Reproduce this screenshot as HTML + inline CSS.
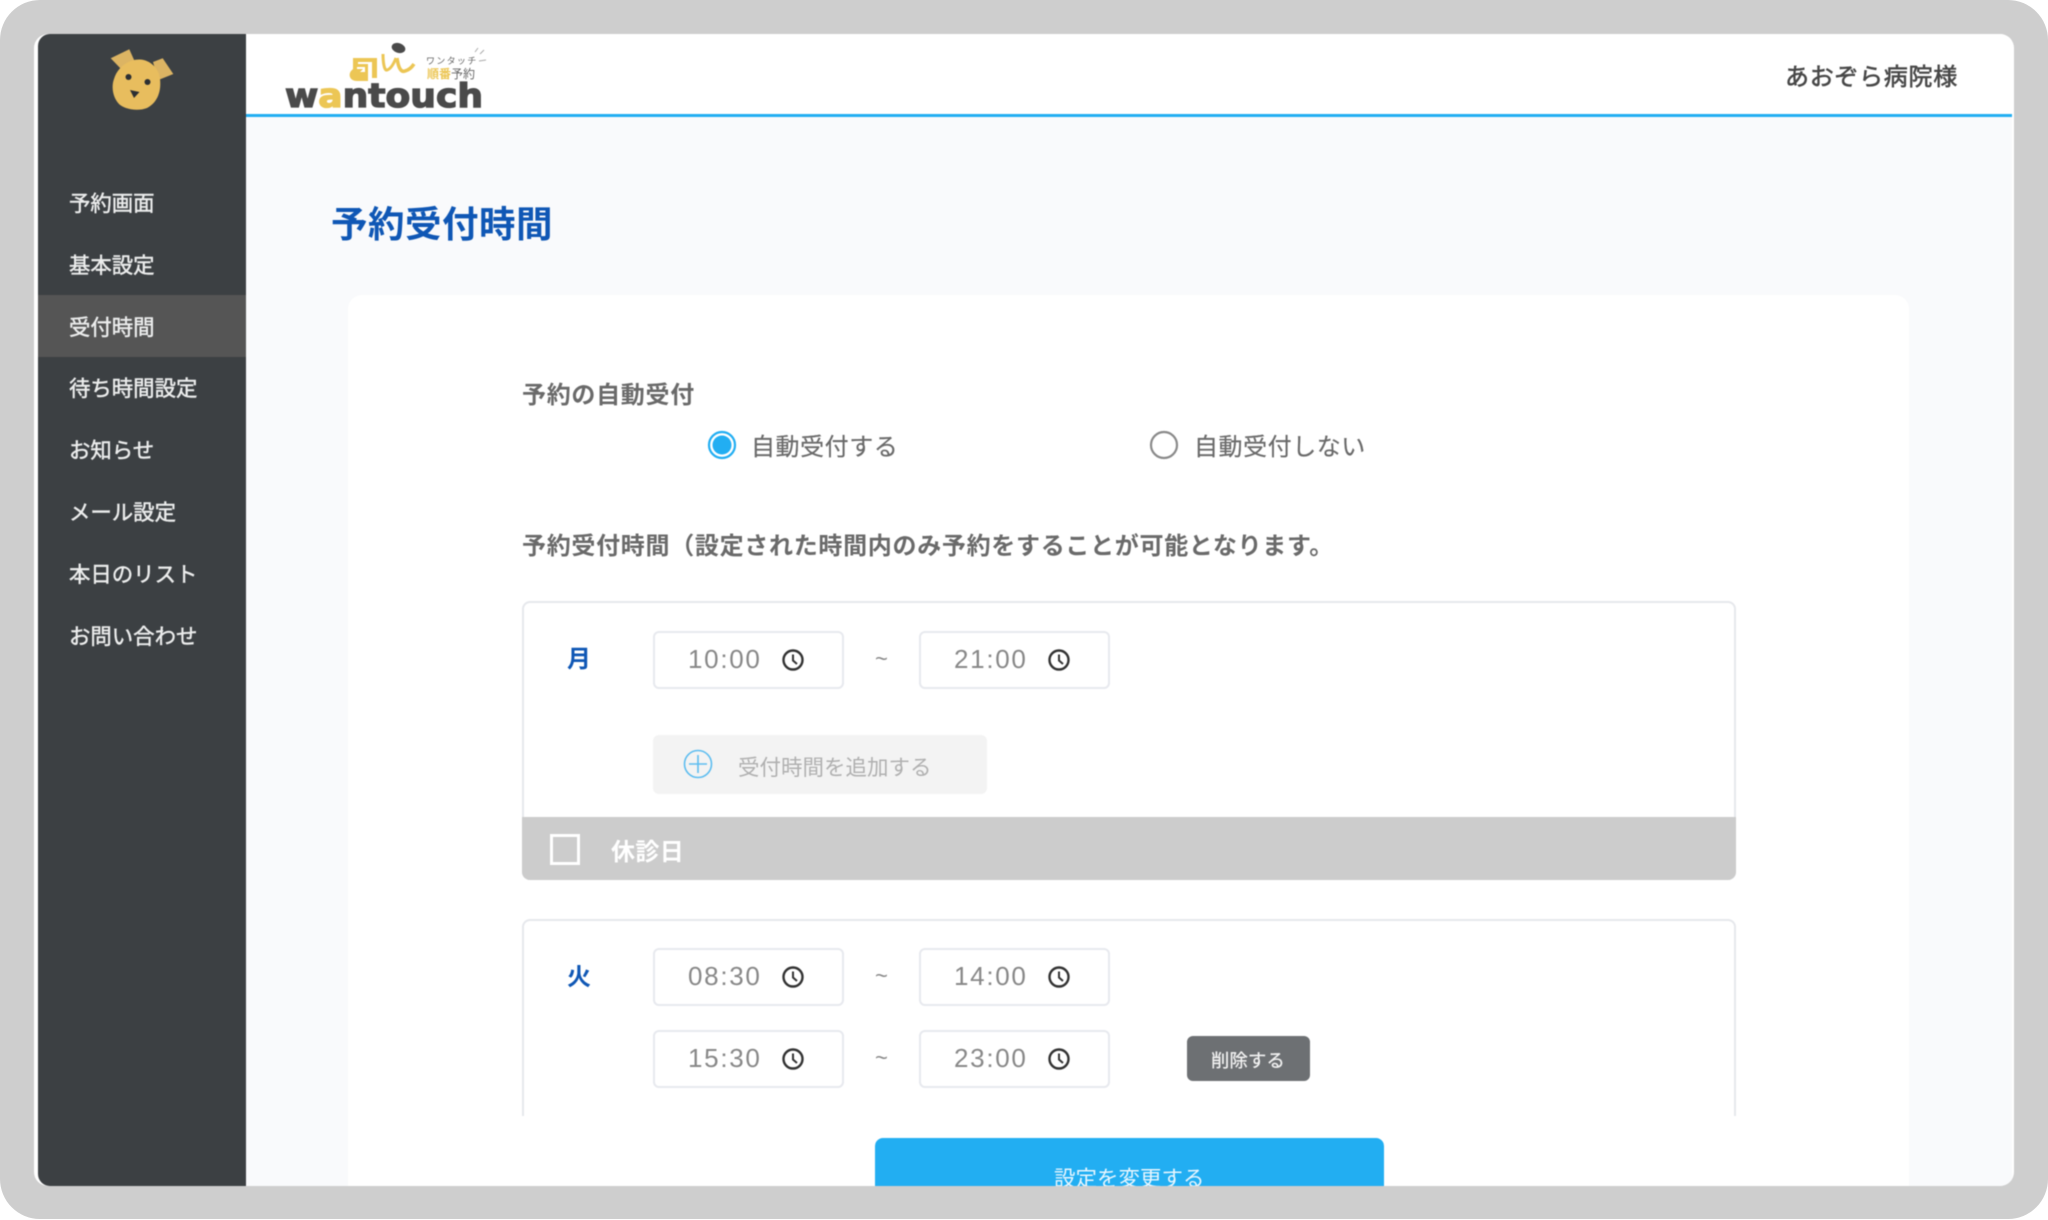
<!DOCTYPE html>
<html lang="ja">
<head>
<meta charset="utf-8">
<title>予約受付時間</title>
<style>
html,body{margin:0;padding:0;width:2048px;height:1220px;overflow:hidden;background:#fff}
body{position:relative;font-family:"Liberation Sans","Noto Sans CJK JP",sans-serif;color:#666}
div,span,svg{position:absolute;box-sizing:border-box}
.t{white-space:nowrap;font-family:"Noto Sans CJK JP","Liberation Sans",sans-serif}
#frame{left:0;top:0;width:2048px;height:1219px;background:#cecece;border-radius:40px}
#screen{left:34px;top:34px;width:1980px;height:1152px;background:#fff;border-radius:14px;overflow:hidden;filter:blur(.45px)}
#side{left:4px;top:0;width:208px;height:1152px;background:#3c4043;border-radius:12px 0 0 12px}
#main{left:212px;top:83px;width:1766px;height:1069px;background:#f9fafc}
#head{left:212px;top:0;width:1766px;height:83px;background:#fff;border-bottom:3px solid #22aef2}
.nav{left:31px;font-size:21.400px;line-height:30px;color:#eceded;height:30px;-webkit-text-stroke:.45px #eceded}
#active{left:0;top:261px;width:208px;height:62px;background:#555}
#card{left:314px;top:261px;width:1561px;height:900px;background:#fff;border-radius:14px 14px 0 0}
.lab{font-size:24px;letter-spacing:.7px;line-height:34px;height:34px;color:#6a6a6a;font-weight:700}
.reg{font-size:24px;letter-spacing:.55px;line-height:34px;height:34px;color:#6a6a6a;-webkit-text-stroke:.2px #6a6a6a}
.inp{width:191px;height:58px;border:2px solid #e7e9ee;border-radius:6px;background:#fff}
.inp b{position:absolute;left:33px;top:10px;font:400 26px/32px "Liberation Sans",sans-serif;letter-spacing:1.700px;color:#888}
.inp svg{left:125px;top:14px;width:26px;height:26px}
.til{font:400 22px/30px "Liberation Sans",sans-serif;color:#888}
.day{font-size:24px;line-height:34px;color:#0f57b5;font-weight:700}
</style>
</head>
<body>
<div id="frame"></div>
<div id="screen">
  <div id="main"></div>
  <div id="head"></div>
  <div id="side">
    <div id="active"></div>
    <svg style="left:60px;top:0;width:100px;height:90px" viewBox="98 34 100 90">
      <polygon points="110.700,58.300 129.300,49.300 135,62 123,71" fill="#dcb463"/>
      <polygon points="153,62 162.700,58.300 173.300,74 158.300,80" fill="#dcb463"/>
      <path d="M140 59.500C150 60 159 68 160 79C161.500 92 157 103 147 108C138 111.500 125 109.500 119 104C113 98 111 87 114 79C117 68 128 59 140 59.500Z" fill="#e8bd5e"/>
      <circle cx="128.500" cy="77" r="3" fill="#2c2f33"/>
      <circle cx="147.500" cy="82" r="3" fill="#2c2f33"/>
      <polygon points="130,90 139.500,92 134,98" fill="#2c2f33"/>
    </svg>
    <span class="t nav" style="top:154px">予約画面</span>
    <span class="t nav" style="top:216px">基本設定</span>
    <span class="t nav" style="top:278px">受付時間</span>
    <span class="t nav" style="top:339px">待ち時間設定</span>
    <span class="t nav" style="top:401px">お知らせ</span>
    <span class="t nav" style="top:463px">メール設定</span>
    <span class="t nav" style="top:525px">本日のリスト</span>
    <span class="t nav" style="top:587px">お問い合わせ</span>
  </div>

  <svg style="left:236px;top:0;width:250px;height:83px" viewBox="270 34 250 83">
    <path fill-rule="evenodd" d="M353 58H377V78H372V62H358V64H368V81H357C350 81 348 75 351 71L353 69ZM357 67V69H363L360 72H365V67Z" fill="#ecc655"/>
    <path d="M383 54C383 61 384 71 387 70C391 69 394 63 396 58" fill="none" stroke="#ecc655" stroke-width="3"/>
    <path d="M397 58C398 65 400 73 405 71C409 70 412 67 414 64" fill="none" stroke="#ecc655" stroke-width="3.500"/>
    <ellipse cx="398.500" cy="48" rx="7" ry="4.800" transform="rotate(18 398.500 48)" fill="#4a4a4a"/>
    <path d="M475 52L478 48M480 54L484 50M479 61L486 60" stroke="#aaa" stroke-width="1" fill="none"/>
    <text x="426" y="64" font-family="Noto Sans CJK JP, sans-serif" font-size="9" letter-spacing="1.300" fill="#666">ワンタッチ</text>
    <text x="427" y="78" font-family="Noto Sans CJK JP, sans-serif" font-size="12" font-weight="700" fill="#ecc655">順番<tspan fill="#666" font-weight="400">予約</tspan></text>
    <text x="285" y="107" font-family="DejaVu Sans, sans-serif" font-weight="700" font-size="33" textLength="198" lengthAdjust="spacingAndGlyphs" stroke="#4a4a4a" stroke-width="1.300" fill="#4a4a4a">w<tspan fill="#ecc655" stroke="#ecc655">a</tspan>ntouch</text>
  </svg>

  <span class="t" style="left:1751px;top:24px;font-size:24px;letter-spacing:.7px;line-height:34px;color:#484848;-webkit-text-stroke:.6px #484848">あおぞら病院様</span>

  <span class="t" style="left:297px;top:163px;font-size:36.500px;letter-spacing:.5px;line-height:50px;color:#0f57b5;font-weight:700">予約受付時間</span>

  <div id="card"></div>

  <span class="t lab" style="left:488px;top:342px">予約の自動受付</span>

  <svg style="left:672px;top:395px;width:32px;height:32px" viewBox="0 0 32 32">
    <circle cx="16" cy="16" r="13" fill="#fff" stroke="#22aef2" stroke-width="2.200"/>
    <circle cx="16" cy="16" r="9.500" fill="#22aef2"/>
  </svg>
  <span class="t reg" style="left:717px;top:394px">自動受付する</span>
  <svg style="left:1114px;top:395px;width:32px;height:32px" viewBox="0 0 32 32">
    <circle cx="16" cy="16" r="13" fill="#fff" stroke="#8a8a8a" stroke-width="2.200"/>
  </svg>
  <span class="t reg" style="left:1160px;top:394px">自動受付しない</span>

  <span class="t lab" style="left:488px;top:493px">予約受付時間（設定された時間内のみ予約をすることが可能となります。</span>

  <!-- Monday -->
  <div style="left:488px;top:567px;width:1214px;height:279px;border:2px solid #e6e8ec;border-radius:8px;background:#fff"></div>
  <div style="left:488px;top:783px;width:1214px;height:63px;background:#ccc;border-radius:0 0 8px 8px"></div>
  <div style="left:516px;top:800px;width:30px;height:31px;border:3px solid #fff"></div>
  <span class="t" style="left:577px;top:799px;font-size:24px;letter-spacing:.4px;line-height:34px;color:#fff;font-weight:700">休診日</span>

  <span class="t day" style="left:533px;top:606px">月</span>
  <div class="inp" style="left:619px;top:597px"><b>10:00</b><svg viewBox="0 0 26 26"><circle cx="13" cy="13" r="9.500" fill="none" stroke="#333" stroke-width="2.400"/><path d="M13 7.500V13.500L17 17" fill="none" stroke="#333" stroke-width="2"/></svg></div>
  <span class="til" style="left:841px;top:610px">~</span>
  <div class="inp" style="left:885px;top:597px"><b>21:00</b><svg viewBox="0 0 26 26"><circle cx="13" cy="13" r="9.500" fill="none" stroke="#333" stroke-width="2.400"/><path d="M13 7.500V13.500L17 17" fill="none" stroke="#333" stroke-width="2"/></svg></div>
  <div style="left:619px;top:701px;width:334px;height:59px;background:#f3f3f3;border-radius:6px"></div>
  <svg style="left:648px;top:714px;width:32px;height:32px" viewBox="0 0 32 32"><circle cx="16" cy="16" r="13.500" fill="none" stroke="#5dbdf0" stroke-width="1.600"/><path d="M16 7V25M7 16H25" stroke="#5dbdf0" stroke-width="1.600"/></svg>
  <span class="t" style="left:704px;top:718px;font-size:21.500px;line-height:30px;color:#b0b0b0">受付時間を追加する</span>

  <!-- Tuesday -->
  <div style="left:488px;top:885px;width:1214px;height:197px;border:2px solid #e6e8ec;border-bottom:none;border-radius:8px 8px 0 0;background:#fff"></div>
  <span class="t day" style="left:533px;top:924px">火</span>
  <div class="inp" style="left:619px;top:914px"><b>08:30</b><svg viewBox="0 0 26 26"><circle cx="13" cy="13" r="9.500" fill="none" stroke="#333" stroke-width="2.400"/><path d="M13 7.500V13.500L17 17" fill="none" stroke="#333" stroke-width="2"/></svg></div>
  <span class="til" style="left:841px;top:927px">~</span>
  <div class="inp" style="left:885px;top:914px"><b>14:00</b><svg viewBox="0 0 26 26"><circle cx="13" cy="13" r="9.500" fill="none" stroke="#333" stroke-width="2.400"/><path d="M13 7.500V13.500L17 17" fill="none" stroke="#333" stroke-width="2"/></svg></div>
  <div class="inp" style="left:619px;top:996px"><b>15:30</b><svg viewBox="0 0 26 26"><circle cx="13" cy="13" r="9.500" fill="none" stroke="#333" stroke-width="2.400"/><path d="M13 7.500V13.500L17 17" fill="none" stroke="#333" stroke-width="2"/></svg></div>
  <span class="til" style="left:841px;top:1009px">~</span>
  <div class="inp" style="left:885px;top:996px"><b>23:00</b><svg viewBox="0 0 26 26"><circle cx="13" cy="13" r="9.500" fill="none" stroke="#333" stroke-width="2.400"/><path d="M13 7.500V13.500L17 17" fill="none" stroke="#333" stroke-width="2"/></svg></div>
  <div style="left:1153px;top:1002px;width:123px;height:45px;background:#6d7073;border-radius:6px"></div>
  <span class="t" style="left:1177px;top:1013px;font-size:18.300px;line-height:26px;letter-spacing:.2px;color:#f2f2f2;-webkit-text-stroke:.3px #f2f2f2">削除する</span>

  <div style="left:841px;top:1104px;width:509px;height:60px;background:#22aef2;border-radius:8px 8px 0 0"></div>
  <span class="t" style="left:1020px;top:1129px;font-size:21.500px;line-height:30px;color:#e8f6fe">設定を変更する</span>
</div>
</body>
</html>
